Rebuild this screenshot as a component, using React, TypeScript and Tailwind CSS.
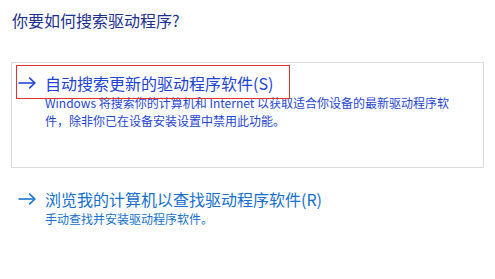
const FONT = { fontFamily: '"Microsoft YaHei UI", "Noto Sans CJK SC", "Noto Sans", sans-serif' }

function Arrow({ color }: { color: string }) {
  return (
    <svg width="18" height="12" viewBox="0 0 18 12" fill="none" stroke={color} strokeWidth="1.6">
      <path d="M0.5 6H16.8" />
      <path d="M11.2 0.6L16.8 6L11.2 11.4" />
    </svg>
  )
}

interface Option {
  title: string
  lines: string[]
  active?: boolean
}

const OPTIONS: Option[] = [
  {
    title: '自动搜索更新的驱动程序软件(S)',
    lines: ['Windows 将搜索你的计算机和 Internet 以获取适合你设备的最新驱动程序软', '件，除非你已在设备安装设置中禁用此功能。'],
    active: true,
  },
  {
    title: '浏览我的计算机以查找驱动程序软件(R)',
    lines: ['手动查找并安装驱动程序软件。'],
  },
]

function CommandLink({ opt }: { opt: Option }) {
  const head = opt.active ? 'text-[#2143d3]' : 'text-[#1670cc]'
  const body = opt.active ? 'text-[#1f45d2]' : 'text-[#1670cc]'
  return (
    <div className="flex">
      <div className="w-[33px] shrink-0 h-[22px] flex items-center pl-[6px]">
        <Arrow color={opt.active ? '#2447d6' : '#1a76cf'} />
      </div>
      <div>
        <div className={`text-[16px] leading-[22px] whitespace-nowrap ${head}`}>{opt.title}</div>
        {opt.lines.map((l) => (
          <div key={l} className={`text-[12px] leading-[18px] whitespace-nowrap ${body}`}>
            {l}
          </div>
        ))}
      </div>
    </div>
  )
}

export default function App() {
  return (
    <div className="w-[495px] h-[279px] bg-white overflow-hidden pt-[9px]" style={FONT}>
      <div className="pl-[12px] text-[16px] leading-[22px] text-[#1d2f8f]">你要如何搜索驱动程序?</div>

      {/* selected option */}
      <div className="relative ml-[11px] mt-[31px] w-[473px] h-[106px] border border-[#dcdcdc] pt-[9px]">
        <div className="absolute left-[4px] top-[2px] w-[274px] h-[34px] border border-[#e5302f]" />
        <CommandLink opt={OPTIONS[0]} />
      </div>

      <div className="mt-[20px] pl-[12px]">
        <CommandLink opt={OPTIONS[1]} />
      </div>
    </div>
  )
}
